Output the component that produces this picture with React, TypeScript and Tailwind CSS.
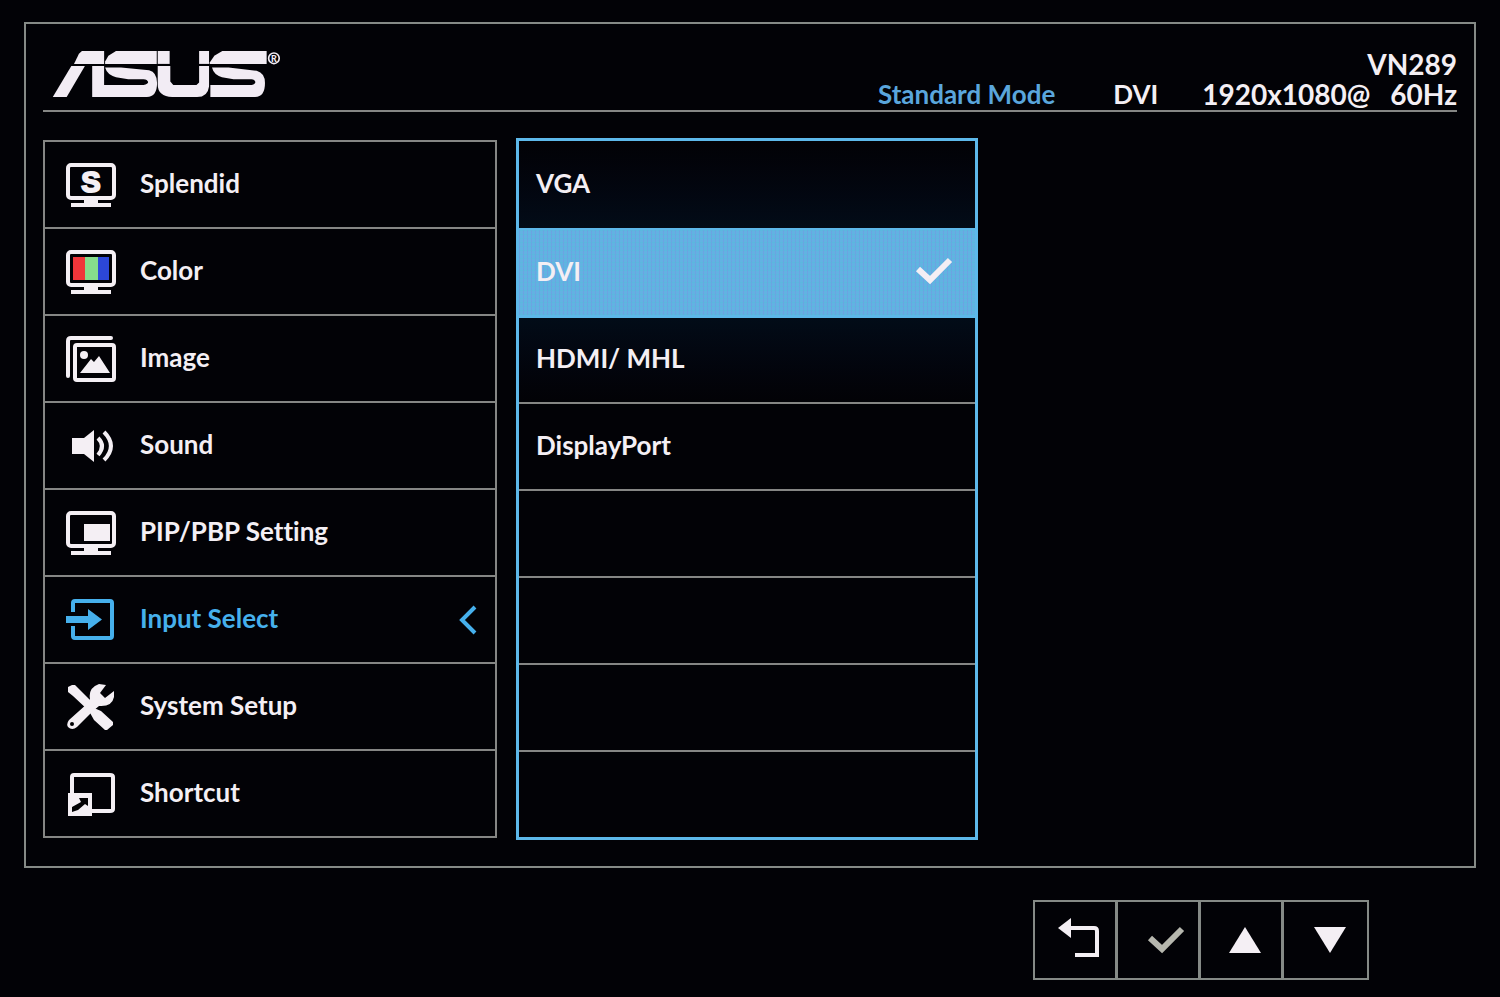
import React, { useState } from "react";

const Logo = () => (
  <svg viewBox="94 105 690 145" className="mt-0.5 h-12 w-[230px] fill-[#f2ecf4]" role="img" aria-label="ASUS">
    <path d="M158 147L173 116L182 108H249V147Z" />
    <path d="M150 153H191L136 247H94Z" />
    <path d="M252 140L262 122L285 108H408V147H252Z" />
    <path d="M213 153H249V211H368Q382 208 382 202Q380 193 368 193H322L285 187Q258 180 252 158H300L385 166Q409 172 409 205Q409 247 378 247H213Z" />
    <path d="M411 108H447V147H411Z" />
    <path d="M536 108H566V147H536Z" />
    <path d="M411 153H449V200L458 211H528L536 203V153H566V215Q562 247 530 247H455Q411 245 411 210Z" />
    <path d="M568 143L582 122L606 108H740V147H568Z" />
    <path d="M575 158H625L710 168Q735 175 735 205Q735 247 705 247H570V211H695Q706 208 706 202Q704 193 694 193H640L605 187Q580 180 575 158Z" />
    <circle cx="762" cy="130" r="16" fill="none" stroke="#f2ecf4" strokeWidth="5" />
    <text x="762" y="140" textAnchor="middle" fontSize="27" fontWeight="900">R</text>
  </svg>
);

const Monitor = ({ children }: { children?: React.ReactNode }) => (
  <>
    <rect x="2" y="3" width="46" height="33" rx="3" fill="none" stroke="currentColor" strokeWidth="4" />
    <path d="M18 37H32V41H45V45H5V41H18Z" />
    {children}
  </>
);

const icons: Record<string, React.ReactNode> = {
  splendid: (
    <Monitor>
      <text x="25" y="30" textAnchor="middle" fontSize="29" fontFamily="Liberation Sans, sans-serif" fontWeight="700" stroke="currentColor" strokeWidth="2">S</text>
    </Monitor>
  ),
  color: (
    <Monitor>
      <rect x="7" y="8" width="12" height="23" fill="#f0353a" />
      <rect x="19" y="8" width="13" height="23" fill="#86dc8c" />
      <rect x="32" y="8" width="11" height="23" fill="#2c47d8" />
    </Monitor>
  ),
  image: (
    <>
      <path d="M2 40V5Q2 2 5 2H45" fill="none" stroke="currentColor" strokeWidth="4" strokeLinecap="round" />
      <rect x="9" y="9" width="39" height="35" rx="2" fill="none" stroke="currentColor" strokeWidth="4" />
      <circle cx="18" cy="19" r="4" />
      <path d="M14 37L25 23L28 26L33 20L44 37Z" />
    </>
  ),
  sound: (
    <>
      <path d="M6 15H18L28 7V39L18 31H6Z" />
      <path d="M32 15Q40 23 32 32M38 9Q52 23 38 37" fill="none" stroke="currentColor" strokeWidth="4" />
    </>
  ),
  pip: (
    <Monitor>
      <rect x="18" y="14" width="26" height="17" />
    </Monitor>
  ),
  input: (
    <>
      <path d="M7 15V6Q7 4 9 4H44Q46 4 46 6V39Q46 41 44 41H9Q7 41 7 39V29" fill="none" stroke="currentColor" strokeWidth="4" />
      <path d="M0 19H22V12L36 22.5L22 33V26H0Z" />
    </>
  ),
  setup: (
    <>
      <path d="M2 3L6 1H9L13 5L29 21L28 24L35 27L47 38V41L41 46H39L28 36L23 27L7 12L2 8Z" />
      <path d="M40 1L33 0Q22 4 24 15L22 19L3 36Q0 40 2 43Q6 47 11 43L27 27L33 22Q46 23 48 13V7L39 14L34 9Z" />
      <circle cx="6" cy="40" r="2" fill="#020204" />
    </>
  ),
  shortcut: (
    <>
      <path d="M6 22V6Q6 4 8 4H44Q47 4 47 6V38Q47 40 44 40H24" fill="none" stroke="currentColor" strokeWidth="4" />
      <path d="M2 22H26V45H2Z" />
      <path d="M13 27H22V35L19 33L12 39L6 41V36L15 31Z" fill="#020204" />
    </>
  ),
};

const menu = [
  { id: "splendid", label: "Splendid" },
  { id: "color", label: "Color" },
  { id: "image", label: "Image" },
  { id: "sound", label: "Sound" },
  { id: "pip", label: "PIP/PBP Setting" },
  { id: "input", label: "Input Select" },
  { id: "setup", label: "System Setup" },
  { id: "shortcut", label: "Shortcut" },
];

const inputs = ["VGA", "DVI", "HDMI/ MHL", "DisplayPort", "", "", "", ""];

// the rows next to the highlighted one pick up a little of its light
const rowStyle = (index: number, selected: number) => {
  if (index === selected) {
    return "border-t-2 border-[#5db8ea] bg-[#62b2e2] bg-[repeating-linear-gradient(90deg,#7a8ee066_0_1px,transparent_1px_4px),repeating-linear-gradient(0deg,#50c0d866_0_1px,transparent_1px_4px)]";
  }
  if (index === selected + 1) {
    return "border-t-3 border-[#5db8ea] bg-linear-to-b from-[#020c18] to-[#020206]";
  }
  const line = index === 0 ? "" : "border-t-2 border-[#858684] ";
  return index === selected - 1 ? line + "bg-linear-to-t from-[#020c18] to-[#020206]" : line;
};

const Check = ({ className }: { className: string }) => (
  <svg viewBox="0 0 38 28" className={className} aria-hidden="true">
    <path d="M3 12L15 23L35 3" fill="none" stroke="currentColor" strokeWidth="6" />
  </svg>
);

const App = () => {
  const [active, setActive] = useState("input");
  const [selected, setSelected] = useState(1);

  return (
    <div className="min-h-screen bg-[#020206] px-6 pt-[22px] pb-4 font-['Lato','Liberation_Sans',sans-serif] text-[26px] leading-[30px] font-bold text-[#f4eff4] [font-variant-ligatures:none]">
      <main className="border-2 border-[#858a86] px-[17px] pt-6 pb-[26px]">
        <header className="flex items-start justify-between border-b-2 border-[#858684] pl-[9px]">
          <Logo />
          <div className="pt-px pb-px text-right text-[28px]">
            <p>VN289</p>
            <div className="flex">
              <span className="mr-[58px] text-[26px] text-[#5aa6dc]">Standard Mode</span>
              <span className="mr-11 text-[26px]">DVI</span>
              <span className="mr-5">1920x1080@</span>
              <span>60Hz</span>
            </div>
          </div>
        </header>

        <div className="mt-[26px] grid grid-cols-[454fr_462fr_460fr] items-start gap-[19px]">
          <nav className="mt-0.5 border-x-2 border-b-2 border-[#858684]">
            {menu.map((item) => (
              <button
                key={item.id}
                type="button"
                onClick={() => setActive(item.id)}
                className={`flex h-[87px] w-full items-center border-t-2 border-[#858684] pr-[18px] pl-[21px] text-left ${active === item.id ? "text-[#46b0ec]" : ""}`}
              >
                <svg viewBox="0 0 50 46" className="mr-6 h-[46px] w-[50px] shrink-0 fill-current" aria-hidden="true">
                  {icons[item.id]}
                </svg>
                <span className="flex-1 pb-1">{item.label}</span>
                {active === item.id && (
                  <svg viewBox="0 0 18 30" className="h-[30px] w-[18px]" aria-hidden="true">
                    <path d="M16 2L3 15L16 28" fill="none" stroke="currentColor" strokeWidth="4" />
                  </svg>
                )}
              </button>
            ))}
          </nav>

          <section className="border-3 border-[#5db8ea]">
            {inputs.map((name, i) =>
              name ? (
                <button
                  key={i}
                  type="button"
                  onClick={() => setSelected(i)}
                  className={`flex h-[87px] w-full items-center justify-between pr-[22px] pl-[17px] text-left ${rowStyle(i, selected)}`}
                >
                  <span className="pb-1">{name}</span>
                  {selected === i && <Check className="mb-1 h-7 w-[38px]" />}
                </button>
              ) : (
                <div key={i} className={`h-[87px] ${rowStyle(i, selected)}`} />
              )
            )}
          </section>
        </div>
      </main>

      <footer className="mt-8 mr-[107px] flex justify-end">
        <div className="flex divide-x-3 divide-[#858a86] border-2 border-[#858a86]">
          <button type="button" aria-label="Back" className="flex h-[76px] w-[83px] items-center justify-center pb-1 pl-2">
            <svg viewBox="0 0 42 42" className="h-[42px] w-[42px] fill-current">
              <path d="M0 11L13 1V21Z" />
              <path d="M11 11H36Q39 11 39 14V38H17" fill="none" stroke="currentColor" strokeWidth="4" />
            </svg>
          </button>
          <button type="button" aria-label="Confirm" className="flex h-[76px] w-[83px] items-center justify-center pl-4 text-[#b6b7ae]">
            <Check className="h-7 w-[38px]" />
          </button>
          <button type="button" aria-label="Up" className="flex h-[76px] w-[83px] items-center justify-center pl-2">
            <svg viewBox="0 0 32 26" className="h-[26px] w-8 fill-current">
              <path d="M16 0L32 26H0Z" />
            </svg>
          </button>
          <button type="button" aria-label="Down" className="flex h-[76px] w-[83px] items-center justify-center pl-2">
            <svg viewBox="0 0 32 26" className="h-[26px] w-8 fill-current">
              <path d="M0 0H32L16 26Z" />
            </svg>
          </button>
        </div>
      </footer>
    </div>
  );
};

export default App;
